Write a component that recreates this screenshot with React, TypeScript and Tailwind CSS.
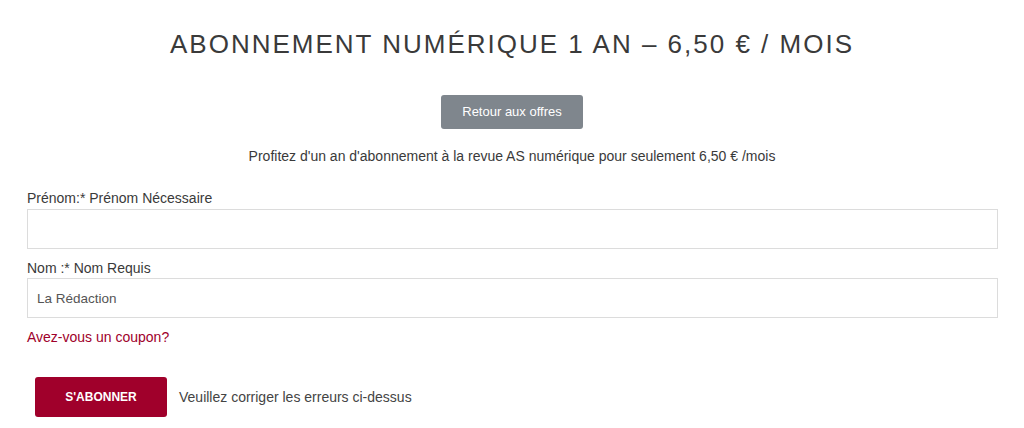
export default function App() {
  return (
    <div
      className="w-[1024px] h-[428px] bg-white text-[#3a3a3a] overflow-hidden"
      style={{ fontFamily: '"Liberation Sans", Arial, sans-serif' }}
    >
      <div className="flex flex-col items-center pt-[29px]">
        <h1 className="text-[26px] leading-[30px] tracking-[2px] text-[#3a3a3a] font-normal">
          ABONNEMENT NUMÉRIQUE 1 AN – 6,50 € / MOIS
        </h1>
        <button className="mt-[36px] w-[142px] h-[34px] rounded-[3px] bg-[#7f868d] text-white text-[13px]">
          Retour aux offres
        </button>
        <p className="mt-[18px] text-[14px] leading-[18px]">
          Profitez d'un an d'abonnement à la revue AS numérique pour seulement 6,50 € /mois
        </p>
      </div>

      <form className="pl-[27px] pr-[26px] mt-[24px] flex flex-col">
        <label className="text-[14px] leading-[18px]">Prénom:* Prénom Nécessaire</label>
        <input
          type="text"
          className="mt-[2px] h-[40px] w-full border border-[#dcdcdc] px-[9px] text-[13.5px] outline-none"
        />
        <label className="mt-[10px] text-[14px] leading-[18px]">Nom :* Nom Requis</label>
        <input
          type="text"
          defaultValue="La Rédaction"
          className="mt-[1px] h-[40px] w-full border border-[#dcdcdc] px-[9px] text-[13.5px] text-[#555] outline-none"
        />
        <a href="#" className="mt-[10px] text-[14px] leading-[18px] text-[#a0002b]">
          Avez-vous un coupon?
        </a>
        <div className="mt-[31px] flex items-center gap-[12px] pl-[8px]">
          <button
            type="button"
            className="w-[132px] h-[40px] rounded-[3px] bg-[#a0002b] text-white text-[12px] font-bold"
          >
            S'ABONNER
          </button>
          <span className="text-[14px] text-[#444]">Veuillez corriger les erreurs ci-dessus</span>
        </div>
      </form>
    </div>
  );
}
